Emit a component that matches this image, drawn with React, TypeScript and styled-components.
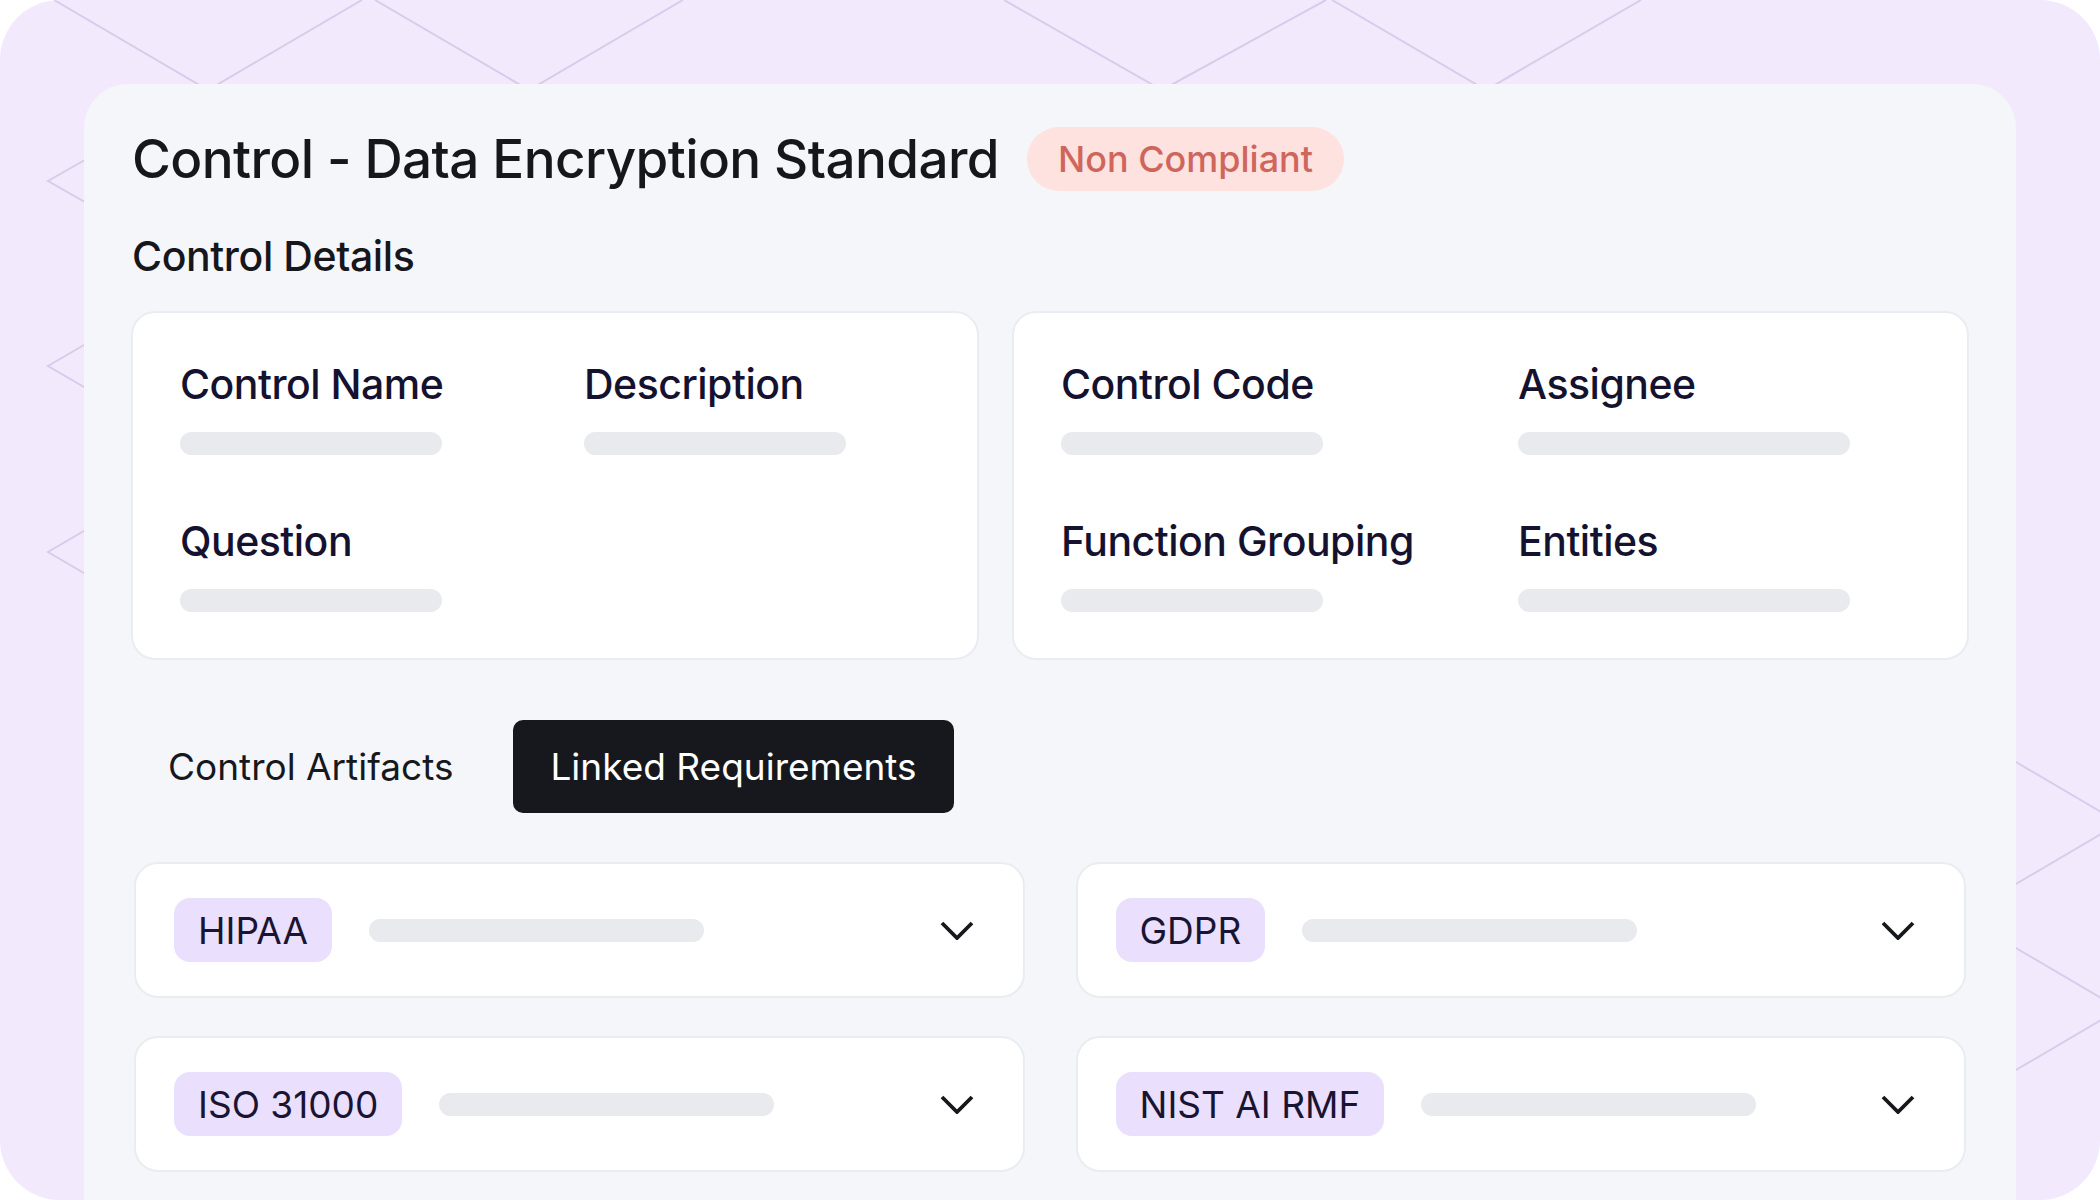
import styled, { createGlobalStyle } from "styled-components";

const GlobalStyle = createGlobalStyle`
  html, body {
    margin: 0;
    padding: 0;
    background: #ffffff;
  }
  body {
    font-family: Inter, "Noto Sans", sans-serif;
  }
  * {
    box-sizing: border-box;
  }
`;

type Field = { label: string; bar: number };

const leftFields: Field[] = [
  { label: "Control Name", bar: 262 },
  { label: "Description", bar: 262 },
  { label: "Question", bar: 262 },
];

const rightFields: Field[] = [
  { label: "Control Code", bar: 262 },
  { label: "Assignee", bar: 332 },
  { label: "Function Grouping", bar: 262 },
  { label: "Entities", bar: 332 },
];

const requirements = ["HIPAA", "GDPR", "ISO 31000", "NIST AI RMF"];

// zigzag strokes of the lavender backdrop, most of them hidden under the panel
const patternLines = [
  "54,0 208,90 362,0",
  "375,0 529,90 683,0",
  "1004,0 1162,90 1326,0",
  "1332,0 1486,90 1641,0",
  "120,140 48,181 120,222",
  "120,324 48,366 120,408",
  "120,510 48,552 120,594",
  "1980,741 2120,823 1980,905",
  "1980,927 2120,1009 1980,1091",
];

const Chevron = () => (
  <svg width="34" height="19" viewBox="0 0 34 19" fill="none">
    <polyline
      points="2,2 17,17 32,2"
      stroke="#16181d"
      strokeWidth="3.8"
      strokeLinejoin="miter"
    />
  </svg>
);

const DetailsCard = ({ fields, col }: { fields: Field[]; col: number }) => (
  <Card $col={col}>
    {fields.map((f) => (
      <FieldBlock key={f.label}>
        <FieldLabel>{f.label}</FieldLabel>
        <Skeleton $w={f.bar} />
      </FieldBlock>
    ))}
  </Card>
);

const App = () => {
  return (
    <>
      <GlobalStyle />
      <Backdrop>
        <Pattern width="2100" height="1200" viewBox="0 0 2100 1200">
          {patternLines.map((p) => (
            <polyline key={p} points={p} fill="none" stroke="#d7cdea" strokeWidth="2" />
          ))}
        </Pattern>
        <Panel>
          <TitleRow>
            <Title>Control - Data Encryption Standard</Title>
            <StatusBadge>Non Compliant</StatusBadge>
          </TitleRow>
          <SectionTitle>Control Details</SectionTitle>
          <DetailsGrid>
            <DetailsCard fields={leftFields} col={404} />
            <DetailsCard fields={rightFields} col={457} />
          </DetailsGrid>
          <Tabs>
            <Tab>Control Artifacts</Tab>
            <Tab $active>Linked Requirements</Tab>
          </Tabs>
          <RequirementGrid>
            {requirements.map((r) => (
              <RequirementRow key={r}>
                <FrameworkChip>{r}</FrameworkChip>
                <Skeleton $w={335} />
                <ChevronSlot>
                  <Chevron />
                </ChevronSlot>
              </RequirementRow>
            ))}
          </RequirementGrid>
        </Panel>
      </Backdrop>
    </>
  );
};

export default App;

const Backdrop = styled.div`
  position: relative;
  width: 2100px;
  height: 1200px;
  background: #f2e9fd;
  border-radius: 60px;
  overflow: hidden;
  display: flex;
  flex-direction: column;
  padding: 84px 84px 0;
`;

const Pattern = styled.svg`
  position: absolute;
  left: 0;
  top: 0;
`;

const Panel = styled.div`
  position: relative;
  flex: 1;
  background: #f5f6fa;
  border-radius: 44px 44px 0 0;
  padding: 43px 47px 0;
`;

const TitleRow = styled.div`
  display: flex;
  align-items: center;
  gap: 28px;
  height: 64px;
`;

const Title = styled.h1`
  margin: 0 0 0 1px;
  font-size: 53px;
  font-weight: 500;
  letter-spacing: -0.6px;
  color: #15171c;
  line-height: 1;
  white-space: nowrap;
`;

const StatusBadge = styled.span`
  display: inline-flex;
  align-items: center;
  height: 64px;
  padding: 0 31px;
  border-radius: 32px;
  background: #fde2e0;
  color: #cf665c;
  font-size: 36px;
  font-weight: 500;
  white-space: nowrap;
`;

const SectionTitle = styled.h2`
  margin: 43px 0 0 1px;
  font-size: 41px;
  line-height: 44px;
  font-weight: 500;
  letter-spacing: -0.4px;
  color: #15171c;
`;

const DetailsGrid = styled.div`
  display: grid;
  grid-template-columns: 848px 1fr;
  gap: 33px;
  margin-top: 33px;
`;

const Card = styled.div<{ $col: number }>`
  display: grid;
  grid-template-columns: ${(p) => p.$col}px 1fr;
  row-gap: 63px;
  background: #ffffff;
  border: 2px solid #e9ecf1;
  border-radius: 24px;
  padding: 48px 47px 46px;
`;

const FieldBlock = styled.div`
  display: flex;
  flex-direction: column;
  gap: 25px;
`;

const FieldLabel = styled.div`
  font-size: 41px;
  line-height: 46px;
  font-weight: 500;
  letter-spacing: -0.5px;
  color: #15122f;
  white-space: nowrap;
`;

const Skeleton = styled.div<{ $w: number }>`
  width: ${(p) => p.$w}px;
  height: 23px;
  border-radius: 12px;
  background: #e9eaee;
  flex-shrink: 0;
`;

const Tabs = styled.div`
  display: flex;
  gap: 23px;
  margin-top: 60px;
`;

const Tab = styled.button<{ $active?: boolean }>`
  font-family: Inter, "Noto Sans", sans-serif;
  font-size: 37px;
  line-height: 41px;
  font-weight: 400;
  padding: 26px 37px;
  border: none;
  border-radius: 10px;
  background: ${(p) => (p.$active ? "#16181d" : "transparent")};
  color: ${(p) => (p.$active ? "#ffffff" : "#16181d")};
  cursor: pointer;
`;

const RequirementGrid = styled.div`
  display: grid;
  grid-template-columns: 1fr 1fr;
  column-gap: 51px;
  row-gap: 38px;
  margin-top: 49px;
  padding: 0 3px;
`;

const RequirementRow = styled.div`
  display: flex;
  align-items: center;
  gap: 37px;
  height: 136px;
  padding: 0 49px 0 38px;
  background: #ffffff;
  border: 2px solid #e9ecf1;
  border-radius: 24px;
`;

const FrameworkChip = styled.span`
  display: inline-flex;
  align-items: center;
  height: 64px;
  padding: 0 24px;
  border-radius: 16px;
  background: #eadffd;
  color: #1a1433;
  font-size: 37px;
  font-weight: 400;
  white-space: nowrap;
`;

const ChevronSlot = styled.span`
  margin-left: auto;
  display: flex;
  align-items: center;
`;
